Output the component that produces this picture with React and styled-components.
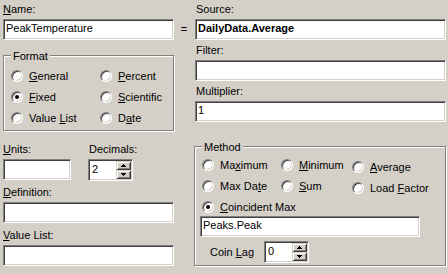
import React from "react";
import styled, { createGlobalStyle } from "styled-components";

const FONT = `"Liberation Sans", Arial, sans-serif`;

const GlobalStyle = createGlobalStyle`
  html, body { margin: 0; padding: 0; background: #d4d0c8; }
  body { font-family: ${FONT}; font-size: 11px; color: #000; }
`;

const Dialog = styled.div`
  width: 448px;
  height: 274px;
  box-sizing: border-box;
  padding: 3px 0 0 3px;
  display: flex;
  background: #d4d0c8;
  font-family: ${FONT};
  font-size: 11px;
  line-height: 13px;
  color: #000;
  overflow: hidden;
`;

const LeftCol = styled.div`
  width: 171px;
  display: flex;
  flex-direction: column;
`;

const EqualsCol = styled.div`
  width: 20px;
  padding-top: 16px;
  height: 21px;
  line-height: 21px;
  text-align: center;
`;

const RightCol = styled.div`
  width: 252px;
  display: flex;
  flex-direction: column;
`;

const Label = styled.div`
  height: 13px;
  line-height: 13px;
  white-space: nowrap;
  margin-top: ${(p) => p.$mt || 0}px;
  margin-bottom: 3px;
  padding-left: ${(p) => p.$indent || 0}px;
`;

const Edit = styled.input`
  box-sizing: border-box;
  display: block;
  width: ${(p) => (p.$w ? `${p.$w}px` : "100%")};
  height: 21px;
  margin: ${(p) => p.$mt || 0}px 0 0 ${(p) => p.$ml || 0}px;
  padding: 0 2px 4px;
  border: 1px solid;
  border-color: #808080 #ffffff #ffffff #808080;
  box-shadow: inset 1px 1px 0 #404040, inset -1px -1px 0 #d4d0c8;
  background: #fff;
  font-family: ${FONT};
  font-size: 11px;
  line-height: 13px;
  font-weight: ${(p) => (p.$bold ? "bold" : "normal")};
  color: #000;
  outline: none;
`;

const GroupBox = styled.div`
  position: relative;
  box-sizing: border-box;
  width: ${(p) => p.$w}px;
  height: ${(p) => p.$h}px;
  margin-top: ${(p) => p.$mt || 0}px;
  padding: ${(p) => p.$pad};
  border: 1px solid #808080;
  box-shadow: inset 1px 1px 0 #fff, 1px 1px 0 #fff;
`;

const Legend = styled.span`
  position: absolute;
  top: -6px;
  left: 7px;
  padding: 0 2px;
  background: #d4d0c8;
  line-height: 13px;
`;

const RadioGrid = styled.div`
  display: grid;
  grid-template-columns: ${(p) => p.$cols};
  grid-auto-rows: ${(p) => p.$row}px;
  row-gap: ${(p) => p.$gap || 0}px;
  padding-left: ${(p) => p.$pl || 0}px;
`;

const RadioItem = styled.div`
  display: flex;
  align-items: center;
  box-sizing: border-box;
  height: 100%;
  padding-top: ${(p) => (p.$drop ? 4 : 0)}px;
  white-space: nowrap;
  grid-column: ${(p) => (p.$span ? "1 / -1" : "auto")};
`;

const RadioCircle = styled.span`
  box-sizing: border-box;
  flex: none;
  width: 12px;
  height: 12px;
  margin-right: 6px;
  border-radius: 50%;
  border: 1px solid;
  border-color: #808080 #ffffff #ffffff #808080;
  box-shadow: inset 1px 1px 0 #404040, inset -1px -1px 0 #d4d0c8;
  background: #fff;
  display: flex;
  align-items: center;
  justify-content: center;
`;

const Dot = styled.span`
  width: 4px;
  height: 4px;
  border-radius: 50%;
  background: #000;
`;

const UnitsRow = styled.div`
  display: flex;
  gap: 17px;
  margin-top: 12px;
`;

const FieldCol = styled.div`
  display: flex;
  flex-direction: column;
  width: ${(p) => p.$w}px;
`;

const SpinBox = styled.div`
  box-sizing: border-box;
  width: 45px;
  height: 22px;
  display: flex;
  padding: 1px;
  border: 1px solid;
  border-color: #808080 #ffffff #ffffff #808080;
  box-shadow: inset 1px 1px 0 #404040, inset -1px -1px 0 #d4d0c8;
  background: #fff;
  flex: none;
`;

const SpinField = styled.input`
  flex: 1;
  min-width: 0;
  box-sizing: border-box;
  height: 100%;
  margin: 0;
  border: 0;
  padding: 0 0 3px 2px;
  background: transparent;
  font-family: ${FONT};
  font-size: 11px;
  line-height: 13px;
  color: #000;
  outline: none;
`;

const SpinButtons = styled.div`
  width: 15px;
  display: flex;
  flex-direction: column;
`;

const SpinButton = styled.div`
  flex: 1;
  background: #d4d0c8;
  box-shadow: inset 1px 1px 0 #d4d0c8, inset -1px -1px 0 #404040,
    inset 2px 2px 0 #ffffff, inset -2px -2px 0 #808080;
  display: flex;
  align-items: center;
  justify-content: center;
`;

const MethodInner = styled.div`
  display: flex;
  flex-direction: column;
`;

const CoinRow = styled.div`
  display: flex;
  align-items: center;
  margin-top: 4px;
`;

const CoinLabel = styled.span`
  box-sizing: border-box;
  width: 64px;
  padding-left: 10px;
  white-space: nowrap;
`;

const Arrow = ({ up }) => (
  <svg width="5" height="3" viewBox="0 0 5 3" shapeRendering="crispEdges">
    <path d={up ? "M2 0h1v1h1v1h1v1H0V2h1V1h1z" : "M0 0h5v1H4v1H3v1H2V2H1V1H0z"} fill="#000" />
  </svg>
);

const Spinner = ({ value }) => (
  <SpinBox>
    <SpinField readOnly defaultValue={value} />
    <SpinButtons>
      <SpinButton>
        <Arrow up />
      </SpinButton>
      <SpinButton>
        <Arrow />
      </SpinButton>
    </SpinButtons>
  </SpinBox>
);

const Radio = ({ label, checked, drop, span }) => (
  <RadioItem $drop={drop} $span={span}>
    <RadioCircle>{checked && <Dot />}</RadioCircle>
    <span>{label}</span>
  </RadioItem>
);

const formatOptions = [
  { label: <><u>G</u>eneral</> },
  { label: <><u>P</u>ercent</> },
  { label: <><u>F</u>ixed</>, checked: true },
  { label: <><u>S</u>cientific</> },
  { label: <>Value <u>L</u>ist</> },
  { label: <>D<u>a</u>te</> },
];

const methodOptions = [
  { label: <>Ma<u>x</u>imum</> },
  { label: <><u>M</u>inimum</> },
  { label: <><u>A</u>verage</>, drop: true },
  { label: <>Max Da<u>t</u>e</> },
  { label: <><u>S</u>um</> },
  { label: <>Load <u>F</u>actor</>, drop: true },
  { label: <><u>C</u>oincident Max</>, checked: true, span: true },
];

export default function App() {
  return (
    <>
      <GlobalStyle />
      <Dialog>
        <LeftCol>
          <Label>
            <u>N</u>ame:
          </Label>
          <Edit readOnly defaultValue="PeakTemperature" />

          <GroupBox $w={171} $h={76} $mt={15} $pad="9.5px 0 0 7px">
            <Legend>Format</Legend>
            <RadioGrid $cols="89px 1fr" $row={21}>
              {formatOptions.map((o, i) => (
                <Radio key={i} label={o.label} checked={o.checked} />
              ))}
            </RadioGrid>
          </GroupBox>

          <UnitsRow>
            <FieldCol $w={68}>
              <Label>
                <u>U</u>nits:
              </Label>
              <Edit readOnly defaultValue="" />
            </FieldCol>
            <FieldCol $w={45}>
              <Label $indent={1}>Decimals:</Label>
              <Spinner value="2" />
            </FieldCol>
          </UnitsRow>

          <Label $mt={5}>
            <u>D</u>efinition:
          </Label>
          <Edit readOnly defaultValue="" />

          <Label $mt={6}>
            <u>V</u>alue List:
          </Label>
          <Edit readOnly defaultValue="" />
        </LeftCol>

        <EqualsCol>=</EqualsCol>

        <RightCol>
          <Label $indent={2}>Source:</Label>
          <Edit readOnly $bold $ml={1} $w={251} defaultValue="DailyData.Average" />

          <Label $indent={2} $mt={4}>
            Filter:
          </Label>
          <Edit readOnly $ml={1} $w={251} defaultValue="" />

          <Label $indent={2} $mt={4}>
            Multiplier:
          </Label>
          <Edit readOnly $ml={1} $w={251} defaultValue="1" />

          <GroupBox $w={252} $h={120} $mt={24} $pad="8px 0 0 5px">
            <Legend>Method</Legend>
            <MethodInner>
              <RadioGrid $cols="79px 71px 1fr" $row={20} $gap={1} $pl={2}>
                {methodOptions.map((o, i) => (
                  <Radio key={i} label={o.label} checked={o.checked} drop={o.drop} span={o.span} />
                ))}
              </RadioGrid>
              <Edit readOnly $w={220} $mt={-1} defaultValue="Peaks.Peak" />
              <CoinRow>
                <CoinLabel>
                  Coin <u>L</u>ag
                </CoinLabel>
                <Spinner value="0" />
              </CoinRow>
            </MethodInner>
          </GroupBox>
        </RightCol>
      </Dialog>
    </>
  );
}
